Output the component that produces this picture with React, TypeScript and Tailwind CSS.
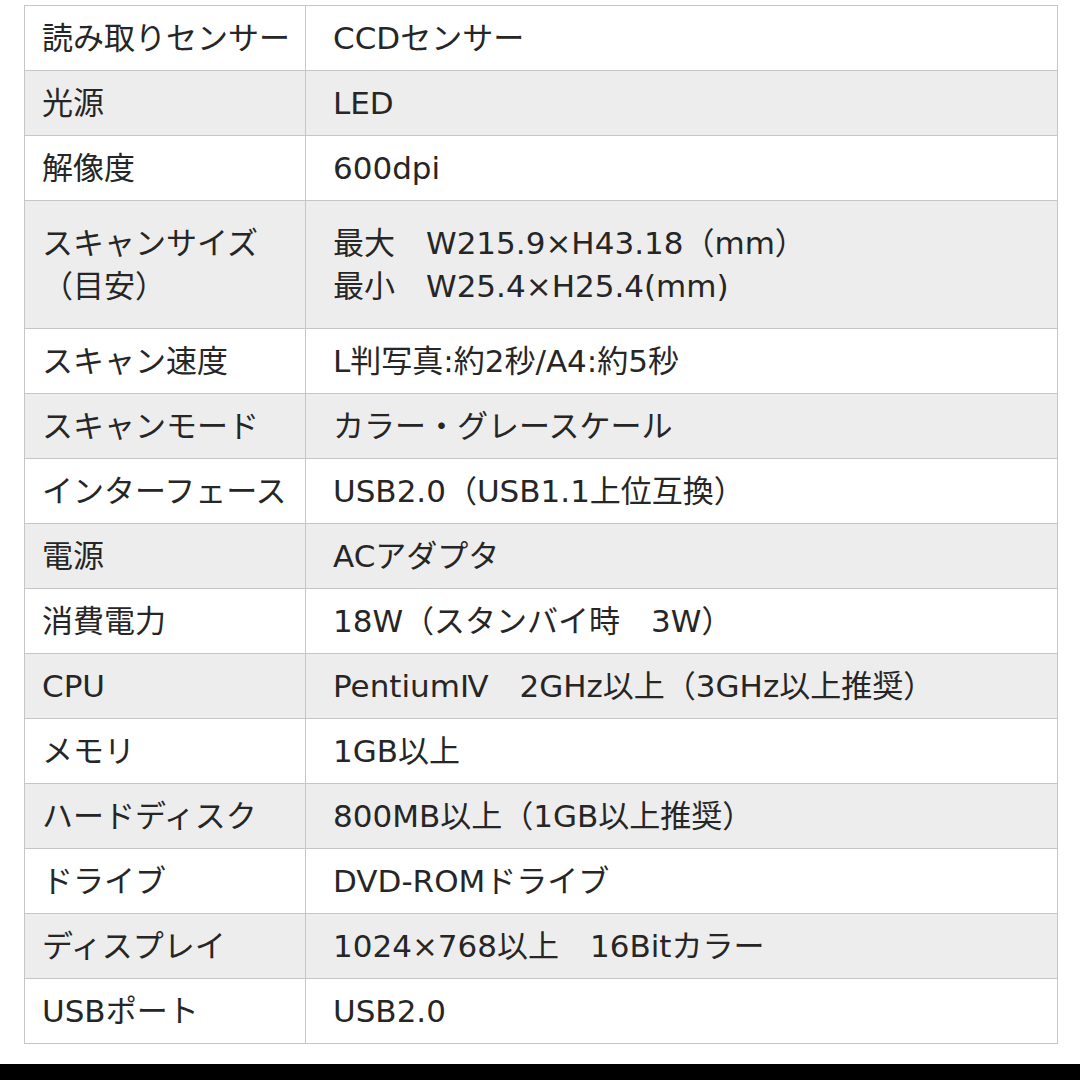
import React from "react";

type Row = { label: React.ReactNode; value: React.ReactNode; tall?: boolean };

const rows: Row[] = [
  { label: "読み取りセンサー", value: "CCDセンサー" },
  { label: "光源", value: "LED" },
  { label: "解像度", value: "600dpi" },
  {
    label: (
      <>
        <div>スキャンサイズ</div>
        <div>（目安）</div>
      </>
    ),
    value: (
      <>
        <div>最大　W215.9×H43.18（mm）</div>
        <div>最小　W25.4×H25.4(mm)</div>
      </>
    ),
    tall: true,
  },
  { label: "スキャン速度", value: "L判写真:約2秒/A4:約5秒" },
  { label: "スキャンモード", value: "カラー・グレースケール" },
  { label: "インターフェース", value: "USB2.0（USB1.1上位互換）" },
  { label: "電源", value: "ACアダプタ" },
  { label: "消費電力", value: "18W（スタンバイ時　3W）" },
  { label: "CPU", value: "PentiumⅣ　2GHz以上（3GHz以上推奨）" },
  { label: "メモリ", value: "1GB以上" },
  { label: "ハードディスク", value: "800MB以上（1GB以上推奨）" },
  { label: "ドライブ", value: "DVD-ROMドライブ" },
  { label: "ディスプレイ", value: "1024×768以上　16Bitカラー" },
  { label: "USBポート", value: "USB2.0" },
];

export default function App() {
  return (
    <div
      className="w-[1080px] h-[1080px] bg-white flex flex-col text-[#262626] text-[31px]"
      style={{ fontFamily: '"DejaVu Sans", "Noto Sans CJK JP", sans-serif' }}
    >
      <div className="pt-[5px] pl-[24px]">
        <div className="w-[1034px] border-l border-r border-b border-[#c6c6c6]">
          {rows.map((r, i) => (
            <div
              key={i}
              className={
                "flex border-t border-[#c6c6c6] " +
                (r.tall ? "h-[128px] " : "h-[65px] ") +
                (i % 2 === 1 ? "bg-[#ededed]" : "bg-white")
              }
            >
              <div className="w-[281px] shrink-0 border-r border-[#c6c6c6] pl-[17px] flex flex-col justify-center leading-[43px] whitespace-nowrap">
                {r.label}
              </div>
              <div className="flex-1 pl-[27px] flex flex-col justify-center leading-[43px] whitespace-nowrap">
                {r.value}
              </div>
            </div>
          ))}
        </div>
      </div>
      <div className="flex-1" />
      <div className="h-[16px] bg-black" />
    </div>
  );
}
